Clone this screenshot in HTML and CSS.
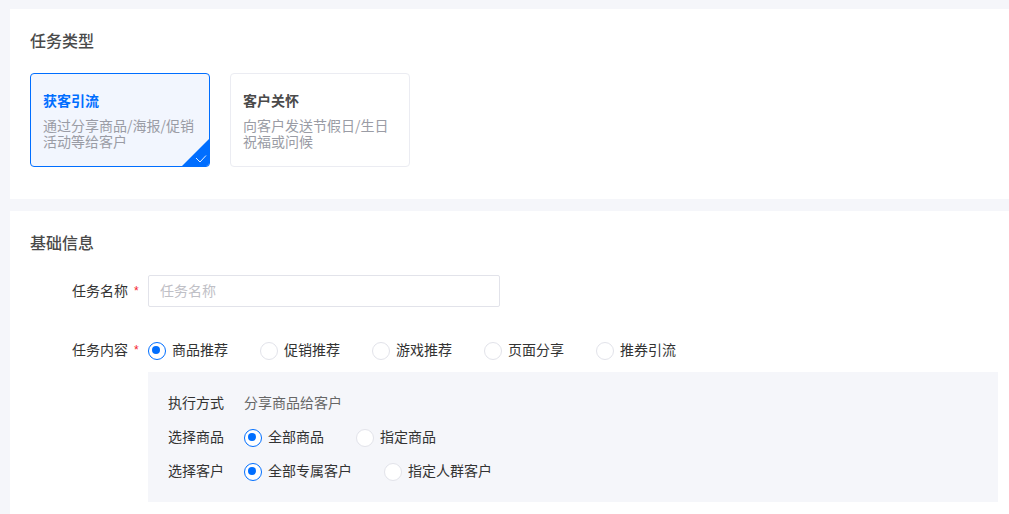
FILE: index.html
```html
<!DOCTYPE html>
<html lang="zh-CN">
<head>
<meta charset="utf-8">
<title>任务</title>
<link rel="stylesheet" href="styles.css">
</head>
<body>
<div class="page">
  <section class="section section-type">
    <h2 class="section-title">任务类型</h2>
    <div class="type-list">
      <div class="type-card is-active">
        <div class="type-name">获客引流</div>
        <div class="type-desc">通过分享商品/海报/促销活动等给客户</div>
        <svg class="type-corner" width="29" height="29" viewBox="0 0 29 29" aria-hidden="true">
          <path d="M29 0V29H0Z" fill="#006eff"/>
          <path d="M15 20L19 24L25 17.500" fill="none" stroke="#e6f0ff" stroke-width="1"/>
        </svg>
      </div>
      <div class="type-card">
        <div class="type-name">客户关怀</div>
        <div class="type-desc">向客户发送节假日/生日祝福或问候</div>
      </div>
    </div>
  </section>
  <section class="section section-base">
    <h2 class="section-title">基础信息</h2>
    <div class="form-row">
      <div class="form-label">任务名称<span class="req">*</span></div>
      <input class="text-input" type="text" placeholder="任务名称">
    </div>
    <div class="form-row form-row-radio">
      <div class="form-label">任务内容<span class="req">*</span></div>
      <div class="radio-group">
        <span class="radio is-checked">商品推荐</span>
        <span class="radio">促销推荐</span>
        <span class="radio">游戏推荐</span>
        <span class="radio">页面分享</span>
        <span class="radio">推券引流</span>
      </div>
    </div>
    <div class="panel">
      <div class="panel-row">
        <div class="panel-label">执行方式</div>
        <div class="panel-value">分享商品给客户</div>
      </div>
      <div class="panel-row">
        <div class="panel-label">选择商品</div>
        <div class="radio-group">
          <span class="radio is-checked">全部商品</span>
          <span class="radio">指定商品</span>
        </div>
      </div>
      <div class="panel-row">
        <div class="panel-label">选择客户</div>
        <div class="radio-group">
          <span class="radio is-checked">全部专属客户</span>
          <span class="radio">指定人群客户</span>
        </div>
      </div>
    </div>
  </section>
</div>
</body>
</html>
```
FILE: styles.css
```css
* { box-sizing: border-box; }
html, body {
  margin: 0;
  height: 514px;
  overflow: hidden;
  background: #f5f6fa;
}
body {
  font-family: "Noto Sans CJK SC", "Liberation Sans", sans-serif;
  font-size: 14px;
  color: #333;
}
.page {
  padding: 9px 0 0 10px;
  display: flex;
  flex-direction: column;
  gap: 12px;
}
.section {
  background: #fff;
  padding: 20px 20px 32px;
}
.section-type {
  height: 190px;
}
.section-base {
  padding-right: 11px;
  height: 320px;
}
.section-title {
  margin: 0;
  font-size: 16px;
  font-weight: 500;
  line-height: 22px;
  color: #4a4a4a;
}
.type-list {
  display: flex;
  gap: 20px;
  margin-top: 22px;
}
.type-card {
  position: relative;
  width: 180px;
  height: 94px;
  padding: 16px 12px 0;
  border: 1px solid #ebecf2;
  border-radius: 4px;
  overflow: hidden;
  background: #fff;
}
.type-card.is-active {
  border-color: #006eff;
  background: #f2f6fe;
}
.type-name {
  font-weight: 700;
  line-height: 20px;
  color: #4a4a4a;
}
.is-active .type-name { color: #006eff; }
.type-desc {
  margin-top: 7px;
  line-height: 16px;
  color: #9a9ca5;
}
.type-corner {
  position: absolute;
  right: -1px;
  bottom: -1px;
  display: block;
}
.form-row {
  display: flex;
  align-items: center;
  margin-top: 22px;
}
.form-row-radio {
  margin-top: 32px;
}
.form-label {
  display: flex;
  align-items: flex-start;
  width: 118px;
  height: 22px;
  padding-left: 42px;
  line-height: 20px;
  white-space: nowrap;
}
.req {
  margin-left: 6px;
  color: #f5222d;
  font-family: "Liberation Sans", sans-serif;
  font-size: 12px;
  line-height: 22px;
}
.text-input {
  width: 352px;
  height: 32px;
  padding: 0 11px 2px;
  border: 1px solid #e2e3ea;
  border-radius: 2px;
  outline: none;
  font: inherit;
  color: #333;
  background: #fff;
}
.text-input::placeholder {
  color: #bfc0c6;
  opacity: 1;
}
.radio-group {
  display: flex;
  gap: 32px;
}
.radio {
  position: relative;
  display: block;
  height: 22px;
  padding-left: 24px;
  line-height: 20px;
  white-space: nowrap;
}
.radio::before {
  content: "";
  position: absolute;
  left: 0;
  top: 3px;
  width: 16px;
  height: 16px;
  border: 1px solid #e2e3ea;
  border-radius: 50%;
  background: #fff;
}
.radio.is-checked::before {
  border-color: #006eff;
}
.radio.is-checked::after {
  content: "";
  position: absolute;
  left: 4px;
  top: 7px;
  width: 8px;
  height: 8px;
  border-radius: 50%;
  background: #006eff;
}
.panel {
  margin: 11px 0 0 118px;
  padding: 20px;
  display: flex;
  flex-direction: column;
  gap: 12px;
  background: #f5f6fa;
}
.panel-row {
  display: flex;
  height: 22px;
  line-height: 20px;
}
.panel-label {
  width: 76px;
}
.panel-value {
  color: #666;
}
```
